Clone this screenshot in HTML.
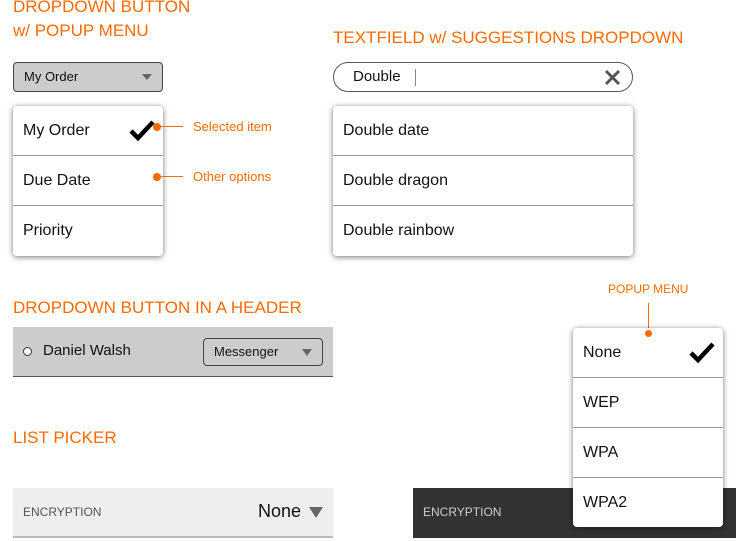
<!DOCTYPE html>
<html><head><style>
*{margin:0;padding:0;box-sizing:border-box}
body{width:736px;height:541px;background:#fff;font-family:"Liberation Sans",sans-serif;position:relative;overflow:hidden;color:#111}
.a{position:absolute}
.t{color:#ff6a00;font-size:17px;letter-spacing:0;line-height:20px}
.menu{position:absolute;background:#fff;border-radius:4px;box-shadow:0 1px 6px rgba(0,0,0,.55)}
.row{height:50px;border-bottom:1px solid #999;font-size:16px;line-height:50px;padding-left:10px;position:relative}
.row:last-child{border-bottom:none}
.co{color:#ff6a00;font-size:13px}
.dot{width:8px;height:8px;border-radius:50%;background:#ff6a00;position:absolute}
.ln{position:absolute;background:#ff6a00}
.chk{position:absolute;right:10px;top:13px}
</style></head><body>
<div class="a t" style="left:13px;top:-3px">DROPDOWN BUTTON<br><span style="position:relative;top:4px">w/ POPUP MENU</span></div>
<div class="a" style="left:13px;top:62px;width:150px;height:30px;background:#ccc;border:1px solid #444;border-radius:4px;font-size:13px;line-height:28px;padding-left:10px">My Order
<div class="a" style="right:10px;top:11px;border-left:5px solid transparent;border-right:5px solid transparent;border-top:6px solid #666"></div></div>
<div class="menu" style="left:13px;top:106px;width:150px;height:150px">
<div class="row">My Order<svg class="chk" width="26" height="22" viewBox="0 0 26 22" style="right:8px"><path d="M2 12 L9 19 L24 3" stroke="#000" stroke-width="4.5" fill="none"/></svg></div>
<div class="row">Due Date</div><div class="row">Priority</div></div>
<div class="dot" style="left:153px;top:123px"></div><div class="ln" style="left:157px;top:126px;width:26px;height:1px"></div>
<div class="a co" style="left:193px;top:119px">Selected item</div>
<div class="dot" style="left:153px;top:173px"></div><div class="ln" style="left:157px;top:176px;width:26px;height:1px"></div>
<div class="a co" style="left:193px;top:169px">Other options</div>

<div class="a t" style="left:333px;top:28px">TEXTFIELD w/ SUGGESTIONS DROPDOWN</div>
<div class="a" style="left:333px;top:62px;width:300px;height:30px;border:1px solid #555;border-radius:15px;font-size:15px;line-height:28px;padding-left:19px">Double
<div class="a" style="left:81px;top:6px;width:1px;height:17px;background:#888"></div>
<svg class="a" style="right:11px;top:6px" width="17" height="17" viewBox="0 0 17 17"><path d="M2 2L15 15M15 2L2 15" stroke="#555" stroke-width="3"/></svg></div>
<div class="menu" style="left:333px;top:106px;width:300px;height:150px">
<div class="row">Double date</div><div class="row">Double dragon</div><div class="row">Double rainbow</div></div>

<div class="a t" style="left:13px;top:298px">DROPDOWN BUTTON IN A HEADER</div>
<div class="a" style="left:13px;top:327px;width:320px;height:50px;background:#ccc;border-bottom:1px solid #555">
<div class="a" style="left:10px;top:20px;width:9px;height:9px;border:1px solid #333;border-radius:50%;background:#fff"></div>
<div class="a" style="left:30px;top:15px;font-size:15px">Daniel Walsh</div>
<div class="a" style="left:190px;top:11px;width:120px;height:28px;border:1px solid #444;border-radius:4px;font-size:13px;line-height:26px;padding-left:10px">Messenger
<div class="a" style="right:10px;top:10px;border-left:5px solid transparent;border-right:5px solid transparent;border-top:7px solid #666"></div></div></div>

<div class="a t" style="left:13px;top:428px">LIST PICKER</div>
<div class="a" style="left:13px;top:488px;width:320px;height:50px;background:#eee;border-bottom:2px solid #bbb">
<div class="a" style="left:10px;top:17px;font-size:12px;color:#555">ENCRYPTION</div>
<div class="a" style="left:245px;top:13px;font-size:18px">None</div>
<div class="a" style="left:296px;top:19px;border-left:7px solid transparent;border-right:7px solid transparent;border-top:11px solid #666"></div></div>
<div class="a" style="left:413px;top:488px;width:323px;height:50px;background:#333">
<div class="a" style="left:10px;top:17px;font-size:12px;color:#ccc">ENCRYPTION</div></div>

<div class="a co" style="left:608px;top:282px;font-size:12px">POPUP MENU</div>
<div class="ln" style="left:648px;top:303px;width:1px;height:30px"></div>
<div class="menu" style="left:573px;top:328px;width:150px;height:199px">
<div class="row">None<svg class="chk" width="26" height="22" viewBox="0 0 26 22" style="right:8px"><path d="M2 12 L9 19 L24 3" stroke="#000" stroke-width="4.5" fill="none"/></svg></div>
<div class="row">WEP</div><div class="row">WPA</div><div class="row">WPA2</div></div>
<div class="dot" style="left:645px;top:330px;width:7px;height:7px"></div>
</body></html>
